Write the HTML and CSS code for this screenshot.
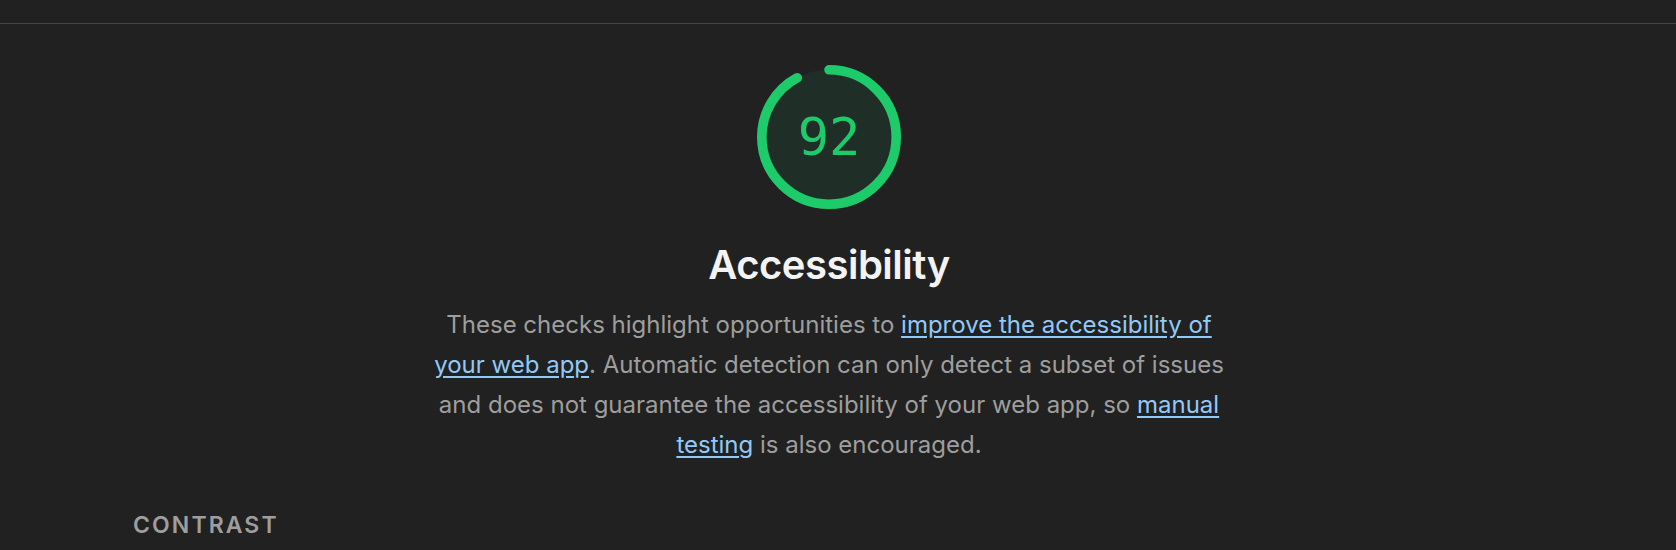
FILE: index.html
```html
<!DOCTYPE html>
<html lang="en">
<head>
<meta charset="utf-8">
<title>Accessibility</title>
<link rel="stylesheet" href="styles.css">
</head>
<body>
<div class="topbar"></div>
<main class="category">
  <div class="header">
    <div class="gauge">
      <svg class="gauge-svg" viewBox="0 0 120 120" width="144" height="144">
        <circle class="gauge-base" cx="60" cy="60" r="56"></circle>
        <circle class="gauge-arc" cx="60" cy="60" r="56" transform="rotate(-90 60 60)"></circle>
      </svg>
      <div class="gauge-value">92</div>
    </div>
    <h1 class="title">Accessibility</h1>
    <p class="description">These checks highlight opportunities to <a href="#">improve the accessibility of your web app</a>. Automatic detection can only detect a subset of issues and does not guarantee the accessibility of your web app, so <a href="#">manual testing</a> is also encouraged.</p>
  </div>
  <h2 class="group-title">Contrast</h2>
</main>
</body>
</html>
```

FILE: styles.css
```css
html, body {
  margin: 0;
  padding: 0;
  background: #212121;
  height: 100%;
  overflow: hidden;
}

body {
  font-family: Inter, "Liberation Sans", sans-serif;
  color: #f1f1f1;
}

.topbar {
  height: 23px;
  border-bottom: 1px solid #444444;
}

.category {
  padding: 41px 151px 0 133px;
}

.header {
  display: flex;
  flex-direction: column;
  align-items: center;
}

.gauge {
  position: relative;
  width: 144px;
  height: 144px;
}

.gauge-svg {
  display: block;
}

.gauge-base {
  fill: rgba(12, 206, 107, 0.08);
  stroke: none;
}

.gauge-arc {
  fill: none;
  stroke: #1ecb6b;
  stroke-width: 8;
  stroke-linecap: round;
  stroke-dasharray: 323.7 351.86;
}

.gauge-value {
  position: absolute;
  inset: 0;
  display: flex;
  align-items: center;
  justify-content: center;
  font-family: "DejaVu Sans Mono", monospace;
  font-size: 52px;
  color: #1ecb6b;
  line-height: 1;
}

.title {
  margin: 31px 0 0;
  font-size: 40px;
  font-weight: 600;
  line-height: 49px;
  color: #f3f3f3;
  letter-spacing: -0.5px;
}

.description {
  margin: 16px 0 0;
  max-width: 800px;
  text-align: center;
  font-size: 24px;
  line-height: 40px;
  color: #9e9e9e;
}

.description a {
  color: #90caf9;
  text-decoration: underline;
  text-underline-offset: 3px;
}

.group-title {
  margin: 46px 0 0;
  font-size: 23px;
  font-weight: 600;
  line-height: normal;
  text-transform: uppercase;
  letter-spacing: 2.1px;
  color: #9e9e9e;
}
```
